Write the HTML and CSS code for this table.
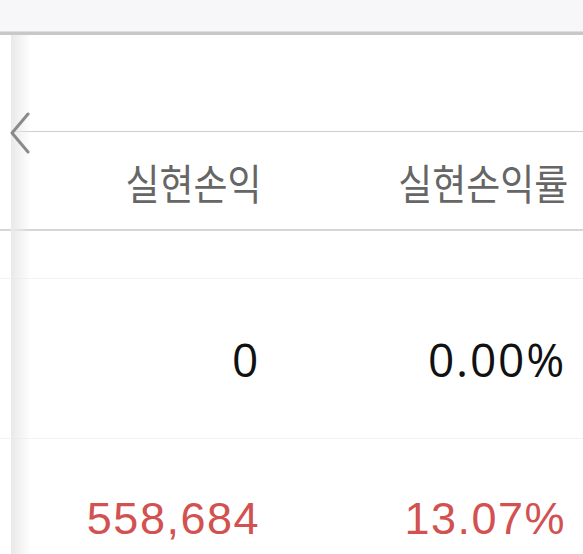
FILE: index.html
```html
<!DOCTYPE html>
<html lang="ko">
<head>
<meta charset="UTF-8">
<meta name="viewport" content="width=device-width, initial-scale=1.0">
<title>실현손익</title>
<link rel="stylesheet" href="styles.css">
</head>
<body>

<div class="topbar"></div>

<div class="table-wrap">
    <div class="head-group"></div>
    <div class="head-row">
        <div class="cell"><span class="label">실현손익</span></div>
        <div class="cell"><span class="label">실현손익률</span></div>
    </div>
    <div class="sub-row"></div>
    <div class="data-row">
        <div class="cell num">0</div>
        <div class="cell num">0.00%</div>
    </div>
    <div class="data-row profit">
        <div class="cell num">558,684</div>
        <div class="cell num">13.07%</div>
    </div>

    <div class="fixed-shadow"></div>
    <svg class="back" width="24" height="46" viewBox="0 0 24 46">
        <polyline points="18,2 2,21 18,40" fill="none" stroke="#8a8a8a" stroke-width="3" stroke-linecap="round" stroke-linejoin="round"/>
    </svg>
</div>

</body>
</html>
```

FILE: styles.css
```css
body {
    margin: 0;
    font-family: "Liberation Sans", Arial, sans-serif;
    background-color: #fff;
    overflow: hidden;
}
.topbar {
    height: 32px;
    background-color: #f7f7f9;
    border-bottom: 3px solid #c8c8c8;
    box-shadow: inset 0 -1px 0 #dedede;
}
.table-wrap {
    position: relative;
    height: 519px;
    overflow: hidden;
}
.head-group {
    height: 96px;
    margin-left: 12px;
    border-bottom: 1px solid #cfcfcf;
}
.head-row,
.data-row {
    display: grid;
    grid-template-columns: 277px 306px;
}
.head-row {
    height: 97px;
    border-bottom: 2px solid #d6d6d6;
    align-items: center;
    font-family: "Noto Sans CJK KR", sans-serif;
    font-size: 42px;
    color: #666;
}
.head-row .cell {
    padding-top: 2px;
    padding-right: 15px;
}
.label {
    display: inline-block;
    transform: scaleX(0.88);
    transform-origin: right center;
}
.sub-row {
    height: 47px;
    border-bottom: 1px solid #f3f3f3;
}
.data-row {
    height: 159px;
    border-bottom: 1px solid #f3f3f3;
    align-items: center;
}
.cell {
    text-align: right;
    padding-right: 20px;
}
.num {
    font-size: 46px;
    letter-spacing: 1.8px;
    color: #111;
    font-family: "Open Sans", sans-serif;
    padding-right: 17px;
}
.profit .num {
    color: #d25151;
    font-family: "Liberation Sans", Arial, sans-serif;
    font-size: 45px;
    letter-spacing: 1.5px;
    padding-right: 17px;
}
.fixed-shadow {
    position: absolute;
    left: 11px;
    top: 0;
    bottom: 0;
    width: 20px;
    background: linear-gradient(to right, #e9e9e9, rgba(255, 255, 255, 0));
}
.back {
    position: absolute;
    left: 10px;
    top: 77px;
}
```
